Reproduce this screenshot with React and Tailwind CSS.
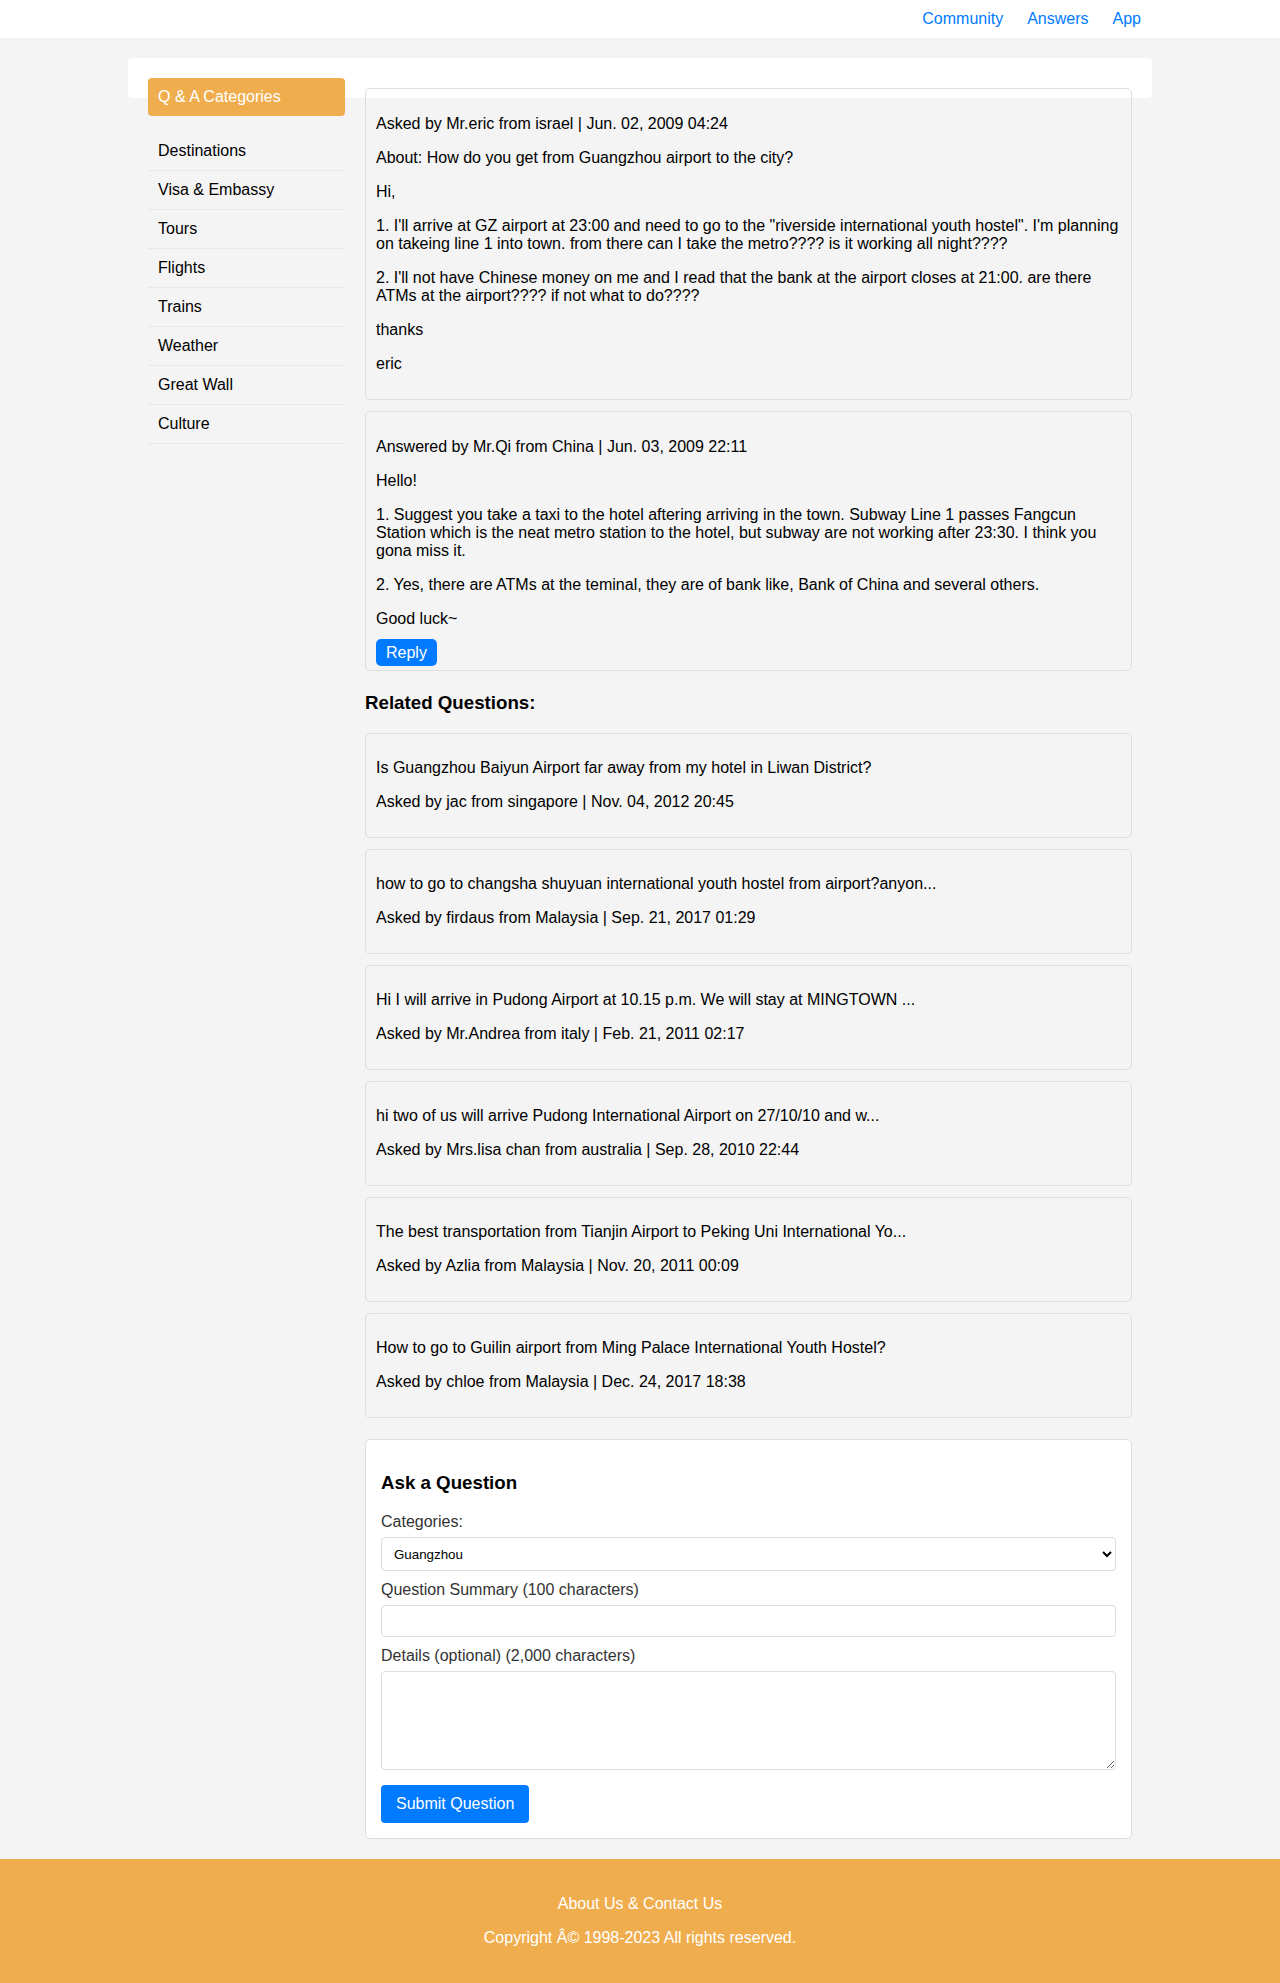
import React from "react";

const categories = [
  "Destinations",
  "Visa & Embassy",
  "Tours",
  "Flights",
  "Trains",
  "Weather",
  "Great Wall",
  "Culture",
];

const related = [
  {
    title: "Is Guangzhou Baiyun Airport far away from my hotel in Liwan District?",
    by: "Asked by jac from singapore | Nov. 04, 2012 20:45",
  },
  {
    title: "how to go to changsha shuyuan international youth hostel from airport?anyon...",
    by: "Asked by firdaus from Malaysia | Sep. 21, 2017 01:29",
  },
  {
    title: "Hi I will arrive in Pudong Airport at 10.15 p.m. We will stay at MINGTOWN ...",
    by: "Asked by Mr.Andrea from italy | Feb. 21, 2011 02:17",
  },
  {
    title: "hi two of us will arrive Pudong International Airport on 27/10/10 and w...",
    by: "Asked by Mrs.lisa chan from australia | Sep. 28, 2010 22:44",
  },
  {
    title: "The best transportation from Tianjin Airport to Peking Uni International Yo...",
    by: "Asked by Azlia from Malaysia | Nov. 20, 2011 00:09",
  },
  {
    title: "How to go to Guilin airport from Ming Palace International Youth Hostel?",
    by: "Asked by chloe from Malaysia | Dec. 24, 2017 18:38",
  },
];

export default function App() {
  return (
    <div className="min-h-screen bg-[#f4f4f4] font-['Liberation_Sans',Arial,sans-serif] text-[16px] leading-[18px] text-black">
      {/* top nav */}
      <header className="h-[38px] bg-white">
        <nav className="mx-auto flex w-[1024px] justify-end gap-[24px] pr-[11px] pt-[10px]">
          <a className="text-[#007bff]">Community</a>
          <a className="text-[#007bff]">Answers</a>
          <a className="text-[#007bff]">App</a>
        </nav>
      </header>

      <div className="mx-auto w-[1024px] pt-5 pb-5">
        <div className="h-10 rounded-[4px] bg-white" />

        <div className="-mt-5 flex justify-between px-5">
          {/* sidebar */}
          <aside className="w-[197px] shrink-0">
            <div className="h-[38px] rounded-[4px] bg-[#f0ad4e] px-[10px] leading-[38px] text-white">
              Q &amp; A Categories
            </div>
            <ul className="mt-[16px]">
              {categories.map((c) => (
                <li key={c} className="border-b border-[#e8e8e8] px-[10px] py-[10px]">
                  {c}
                </li>
              ))}
            </ul>
          </aside>

          {/* main */}
          <main className="mt-[10px] w-[767px] shrink-0">
            <div className="mb-[11px] rounded-[5px] border border-[#ddd] p-[10px]">
              <p className="my-4">Asked by Mr.eric from israel | Jun. 02, 2009 04:24</p>
              <p className="my-4">About: How do you get from Guangzhou airport to the city?</p>
              <p className="my-4">Hi,</p>
              <p className="my-4">
                1. I'll arrive at GZ airport at 23:00 and need to go to the "riverside international youth hostel". I'm planning on takeing line 1 into town. from there can I take the metro???? is it working all night????
              </p>
              <p className="my-4">
                2. I'll not have Chinese money on me and I read that the bank at the airport closes at 21:00. are there ATMs at the airport???? if not what to do????
              </p>
              <p className="my-4">thanks</p>
              <p className="my-4">eric</p>
            </div>

            <div className="mb-[11px] rounded-[5px] border border-[#ddd] px-[10px] pt-[10px] pb-[4px]">
              <p className="my-4">Answered by Mr.Qi from China | Jun. 03, 2009 22:11</p>
              <p className="my-4">Hello!</p>
              <p className="my-4">
                1. Suggest you take a taxi to the hotel aftering arriving in the town. Subway Line 1 passes Fangcun Station which is the neat metro station to the hotel, but subway are not working after 23:30. I think you gona miss it.
              </p>
              <p className="my-4">
                2. Yes, there are ATMs at the teminal, they are of bank like, Bank of China and several others.
              </p>
              <p className="mt-4 mb-[11px]">Good luck~</p>
              <button className="rounded-[5px] bg-[#007bff] px-[10px] py-[5px] leading-[17px] text-white">
                Reply
              </button>
            </div>

            <h3 className="mt-[21px] mb-[19px] text-[18.72px] font-bold leading-[22px]">Related Questions:</h3>

            {related.map((r) => (
              <div key={r.by} className="mb-[11px] rounded-[5px] border border-[#ddd] px-[10px] pt-[9px] pb-[10px]">
                <p className="my-4">{r.title}</p>
                <p className="my-4">{r.by}</p>
              </div>
            ))}

            <div className="mt-[21px] rounded-[5px] border border-[#ddd] bg-white p-[15px]">
              <h3 className="mt-[17px] mb-[19px] text-[18.72px] font-bold leading-[22px]">Ask a Question</h3>

              <label className="mb-[6px] block text-[#333]">Categories:</label>
              <select className="mb-[10px] block h-[34px] w-full rounded-[4px] border border-[#ddd] bg-white px-2 text-[13.33px] text-black">
                <option>Guangzhou</option>
                <option>Beijing</option>
                <option>Shanghai</option>
              </select>

              <label className="mb-[6px] block text-[#333]">Question Summary (100 characters)</label>
              <input
                type="text"
                className="mb-[10px] block h-[32px] w-full rounded-[4px] border border-[#ddd] bg-white px-2 text-[13.33px]"
              />

              <label className="mb-[6px] block text-[#333]">Details (optional) (2,000 characters)</label>
              <textarea className="mb-[15px] block h-[99px] w-full rounded-[4px] border border-[#ddd] bg-white px-2 text-[13.33px]" />

              <button className="h-[38px] rounded-[4px] bg-[#007bff] px-[15px] leading-[18px] text-white">
                Submit Question
              </button>
            </div>
          </main>
        </div>
      </div>

      {/* footer */}
      <footer className="bg-[#f0ad4e] py-5 text-center text-white">
        <p className="my-4">About Us &amp; Contact Us</p>
        <p className="my-4">Copyright Â© 1998-2023 All rights reserved.</p>
      </footer>
    </div>
  );
}
